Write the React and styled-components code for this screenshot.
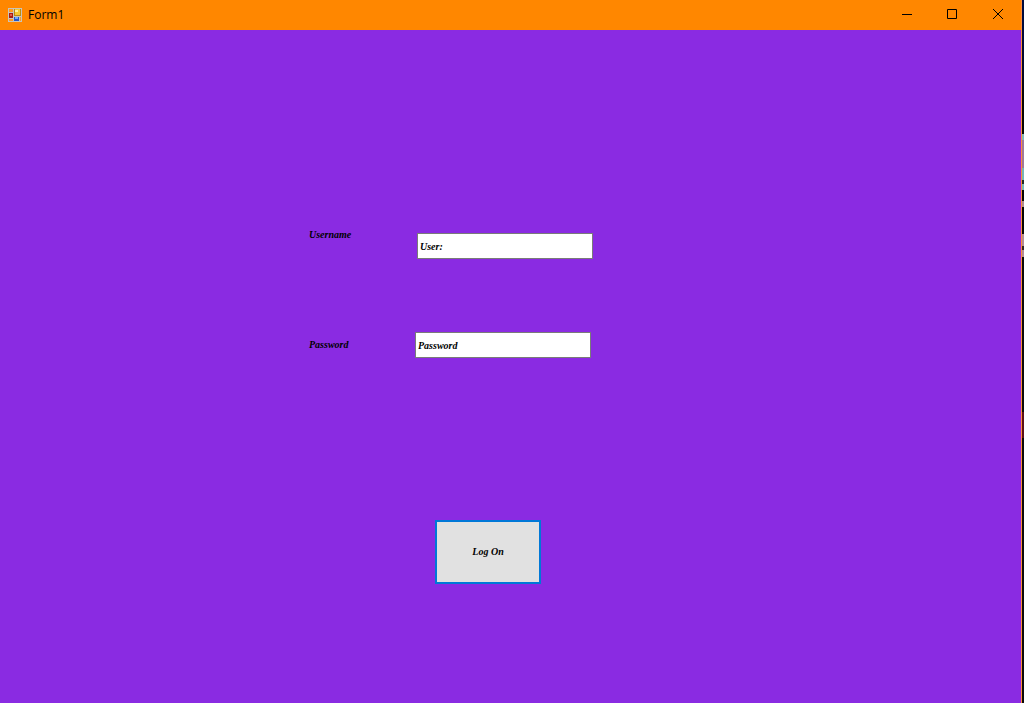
import React from "react";
import styled, { createGlobalStyle } from "styled-components";

const GlobalStyle = createGlobalStyle`
  * { box-sizing: border-box; }
  body { margin: 0; background: #8a2be2; }
`;

const Desktop = styled.div`
  display: flex;
  min-height: 100vh;
`;

const Window = styled.main`
  flex: 1;
  display: flex;
  flex-direction: column;
  border-right: 1px solid #ff8c3a;
  background: #8a2be2;
`;

const DesktopEdge = styled.div`
  width: 2px;
  background: linear-gradient(
    #000a3c 0 40px, #02082a 70px, #050505 100px 134px,
    #7fb5b8 134px 140px, #a07a98 140px 168px, #78b4b8 168px 180px,
    #202828 180px 184px, #78b4b8 184px 190px,
    #050505 190px 201px, #b08c90 201px 207px, #050505 207px 234px,
    #b48c94 234px 246px, #302428 246px 250px, #b48c94 250px 257px,
    #0a0a0a 257px 412px, #5a1018 412px 438px, #0a0a0a 438px
  );
`;

const TitleBar = styled.header`
  display: flex;
  align-items: center;
  height: 30px;
  padding-left: 8px;
  background: #ff8700;
`;

const Title = styled.h1`
  flex: 1;
  margin: 0 0 0 6px;
  font: 400 12px/16px "Open Sans", "Noto Sans", sans-serif;
  color: #000;
`;

const CaptionButton = styled.button`
  display: grid;
  place-items: center;
  width: 46px;
  height: 30px;
  padding: 0 0 2px;
  border: 0;
  background: transparent;
`;

const Form = styled.form`
  padding: 199px 0 40px 309px;
  font: italic 700 10px/12px "Liberation Serif", serif;
  color: #000;
`;

const Row = styled.div`
  display: flex;
  align-items: flex-end;
  height: ${(p) => p.$height}px;
  margin-bottom: 73px;
`;

const Label = styled.label`
  align-self: ${(p) => p.$align};
  width: ${(p) => p.$width}px;
`;

const TextBox = styled.input`
  width: 176px;
  height: 26px;
  padding: 0 2px;
  border: 1px solid #7a7a7a;
  border-radius: 0;
  outline: 0;
  background: #fff;
  font: inherit;
  color: inherit;
`;

const LogOnButton = styled.button`
  display: block;
  width: 106px;
  height: 64px;
  margin: 162px 0 0 126px;
  padding: 0;
  border: 2px solid #0078d7;
  background: #e1e1e1;
  font: inherit;
  color: inherit;
`;

const FormIcon = () => (
  <svg width="14" height="14" viewBox="0 0 14 14" shapeRendering="crispEdges" aria-hidden="true">
    <path fill="#c9c3ba" d="M0 0h14v14H0z" />
    <path fill="#ff9a20" d="M1 1h4v3H1zM1 11h4v2H1z" />
    <path fill="#a81c12" d="M1 5h4v5H1z" />
    <path fill="#e65a4b" d="M2 6h2v2H2z" />
    <path fill="#b98b14" d="M6 1h7v7H6z" />
    <path fill="#f5c832" d="M7 1h5v6H7z" />
    <path fill="#fff0a0" d="M7 2h3v2H7z" />
    <path fill="#2456c8" d="M6 9h5v4H6z" />
    <path fill="#70adf5" d="M7 9h3v2H7z" />
    <path fill="#ff9a20" d="M12 9h1v4h-1z" />
  </svg>
);

const CaptionIcon = ({ d }) => (
  <svg width="11" height="11" viewBox="0 0 11 11" fill="none" stroke="#000" aria-hidden="true">
    <path d={d} />
  </svg>
);

export default function App() {
  return (
    <Desktop>
      <GlobalStyle />
      <Window>
        <TitleBar>
          <FormIcon />
          <Title>Form1</Title>
          <CaptionButton type="button" aria-label="Minimize">
            <CaptionIcon d="M1 5.5h10" />
          </CaptionButton>
          <CaptionButton type="button" aria-label="Maximize">
            <CaptionIcon d="M.5.5h9v9h-9z" />
          </CaptionButton>
          <CaptionButton type="button" aria-label="Close">
            <CaptionIcon d="M0 0l10 10M10 0l-10 10" />
          </CaptionButton>
        </TitleBar>
        <Form onSubmit={(e) => e.preventDefault()}>
          <Row $height={30}>
            <Label htmlFor="username" $align="flex-start" $width={108}>Username</Label>
            <TextBox id="username" defaultValue="User:" />
          </Row>
          <Row $height={26}>
            <Label htmlFor="password" $align="center" $width={106}>Password</Label>
            <TextBox id="password" defaultValue="Password" />
          </Row>
          <LogOnButton type="submit">Log On</LogOnButton>
        </Form>
      </Window>
      <DesktopEdge />
    </Desktop>
  );
}
